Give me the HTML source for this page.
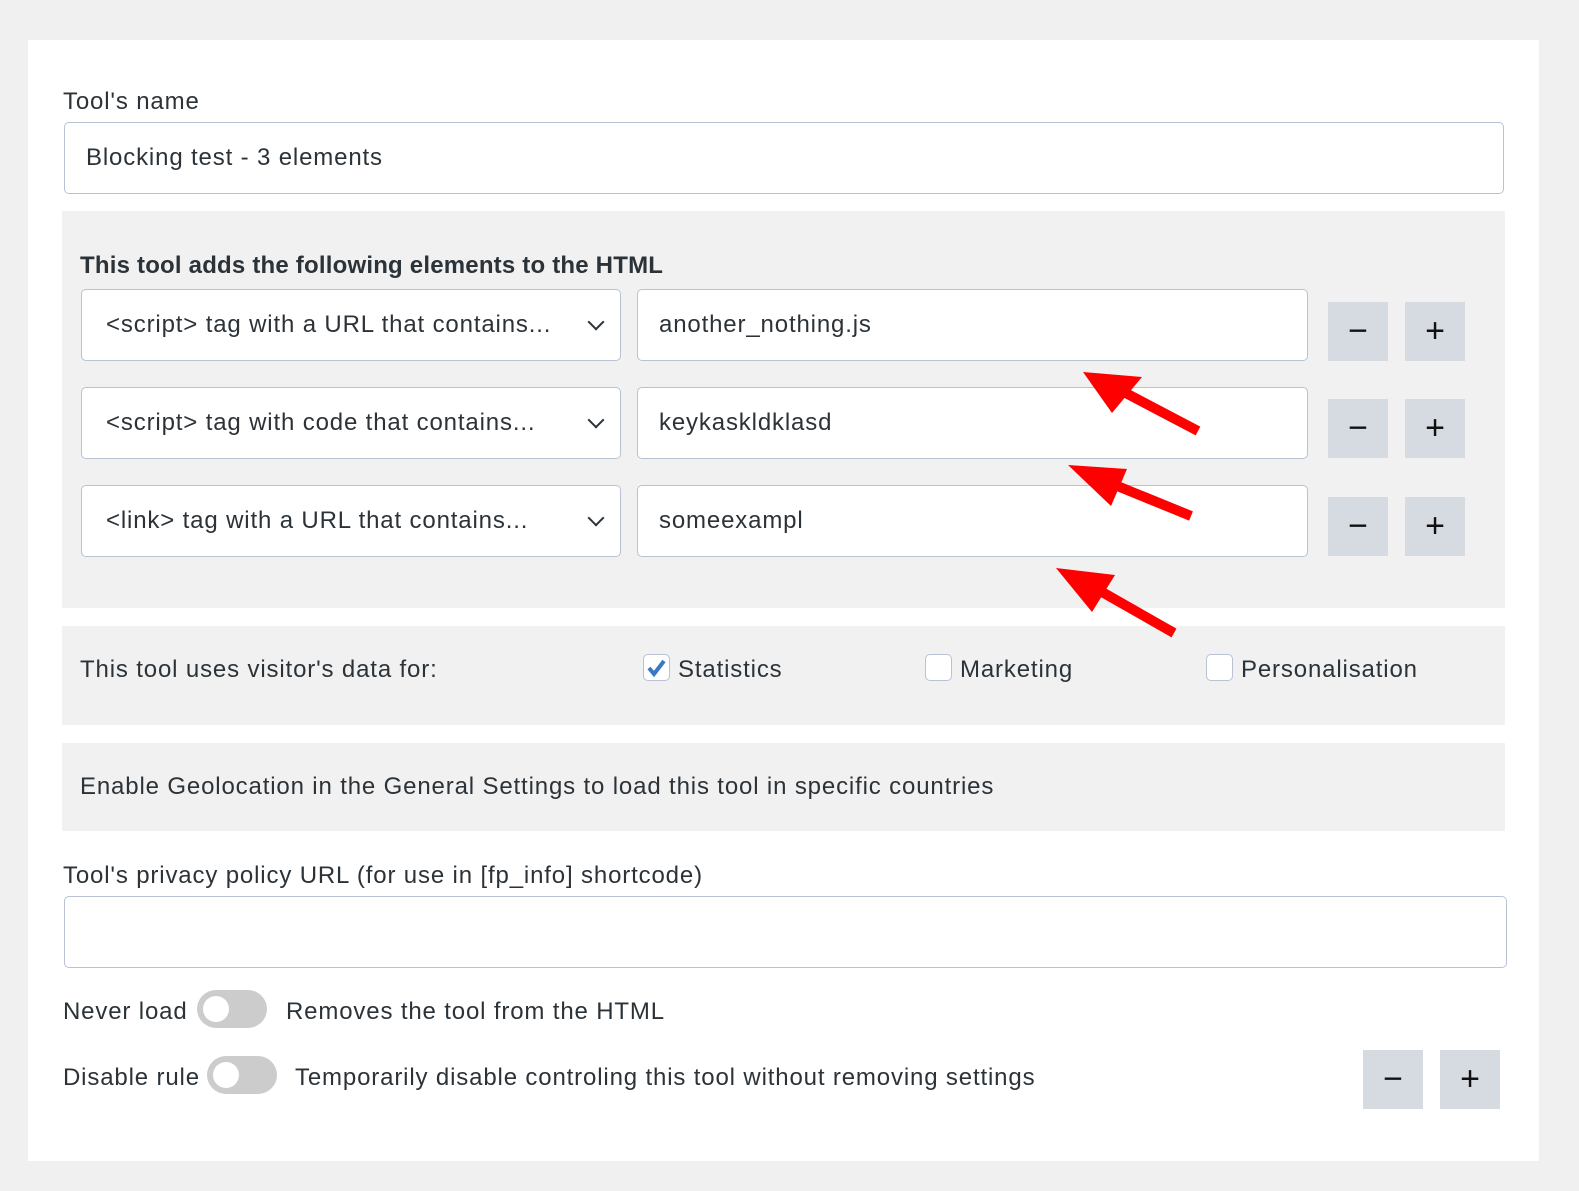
<!DOCTYPE html>
<html><head><style>
*{box-sizing:border-box;margin:0;padding:0}
body{width:1579px;height:1191px;background:#f0f0f1;font-family:"Liberation Sans",sans-serif;color:#2c3338;position:relative;overflow:hidden}
.a{position:absolute}
.card{left:28px;top:40px;width:1511px;height:1121px;background:#fff}
.panel{background:#f1f1f1;left:62px;width:1443px}
.inp{background:#fff;border:1px solid #b8c2d3;border-radius:5px;font-size:24px;letter-spacing:0.85px;padding-left:21px;display:flex;align-items:center}
.t{font-size:24px;letter-spacing:0.85px;white-space:nowrap;margin-top:3px}
.btn{background:#d5dbe1;width:60px;height:59px;display:flex;align-items:center;justify-content:center;font-size:34px;color:#111}
.cb{width:27px;height:27px;border:1px solid #b8c2d3;border-radius:5px;background:#fff}
.tg{width:70px;height:38px;border-radius:19px;background:#ccc}
.tg::after{content:"";position:absolute;left:6px;top:6px;width:26px;height:26px;border-radius:50%;background:#fff}
.chev{position:absolute;right:18px;top:26px;width:12px;height:12px;border-right:2.5px solid #2c3338;border-bottom:2.5px solid #2c3338;transform:rotate(45deg)}
</style></head><body>
<div class="a card"></div>
<div class="a t" style="left:63px;top:85px">Tool's name</div>
<div class="a inp" style="left:64px;top:122px;width:1440px;height:72px">Blocking test - 3 elements</div>
<div class="a panel" style="top:211px;height:397px"></div>
<div class="a t" style="left:80px;top:249px;font-weight:bold;letter-spacing:0.2px">This tool adds the following elements to the HTML</div>

<div class="a inp" style="left:81px;top:289px;width:540px;height:72px;padding-left:24px">&lt;script&gt; tag with a URL that contains...<span class="chev"></span></div>
<div class="a inp" style="left:637px;top:289px;width:671px;height:72px">another_nothing.js</div>
<div class="a btn" style="left:1328px;top:302px">−</div><div class="a btn" style="left:1405px;top:302px">+</div>

<div class="a inp" style="left:81px;top:387px;width:540px;height:72px;padding-left:24px">&lt;script&gt; tag with code that contains...<span class="chev"></span></div>
<div class="a inp" style="left:637px;top:387px;width:671px;height:72px">keykaskldklasd</div>
<div class="a btn" style="left:1328px;top:399px">−</div><div class="a btn" style="left:1405px;top:399px">+</div>

<div class="a inp" style="left:81px;top:485px;width:540px;height:72px;padding-left:24px">&lt;link&gt; tag with a URL that contains...<span class="chev"></span></div>
<div class="a inp" style="left:637px;top:485px;width:671px;height:72px">someexampl</div>
<div class="a btn" style="left:1328px;top:497px">−</div><div class="a btn" style="left:1405px;top:497px">+</div>

<div class="a panel" style="top:626px;height:99px"></div>
<div class="a t" style="left:80px;top:653px">This tool uses visitor's data for:</div>
<div class="a cb" style="left:643px;top:654px"></div>
<svg class="a" style="left:643px;top:654px" width="27" height="27"><path d="M6 14 L11 20 L21 7" stroke="#3a78c4" stroke-width="4" fill="none"/></svg>
<div class="a t" style="left:678px;top:653px">Statistics</div>
<div class="a cb" style="left:925px;top:654px"></div>
<div class="a t" style="left:960px;top:653px">Marketing</div>
<div class="a cb" style="left:1206px;top:654px"></div>
<div class="a t" style="left:1241px;top:653px">Personalisation</div>

<div class="a panel" style="top:743px;height:88px"></div>
<div class="a t" style="left:80px;top:770px">Enable Geolocation in the General Settings to load this tool in specific countries</div>

<div class="a t" style="left:63px;top:859px">Tool's privacy policy URL (for use in [fp_info] shortcode)</div>
<div class="a inp" style="left:64px;top:896px;width:1443px;height:72px"></div>

<div class="a t" style="left:63px;top:995px">Never load</div>
<div class="a tg" style="left:197px;top:990px"></div>
<div class="a t" style="left:286px;top:995px">Removes the tool from the HTML</div>
<div class="a t" style="left:63px;top:1061px">Disable rule</div>
<div class="a tg" style="left:207px;top:1056px"></div>
<div class="a t" style="left:295px;top:1061px">Temporarily disable controling this tool without removing settings</div>
<div class="a btn" style="left:1363px;top:1050px">−</div><div class="a btn" style="left:1440px;top:1050px">+</div>

<svg class="a" style="left:0;top:0" width="1579" height="1191">
<g fill="red" stroke="red">
<line x1="1198" y1="431" x2="1120" y2="390" stroke-width="10"/>
<polygon points="1083,372 1142,377 1112,413" stroke="none"/>
<line x1="1191" y1="516" x2="1110" y2="483" stroke-width="10"/>
<polygon points="1068,465 1127,469 1111,506" stroke="none"/>
<line x1="1174" y1="633" x2="1095" y2="588" stroke-width="10"/>
<polygon points="1056,568 1115,575 1092,612" stroke="none"/>
</g></svg>
</body></html>
